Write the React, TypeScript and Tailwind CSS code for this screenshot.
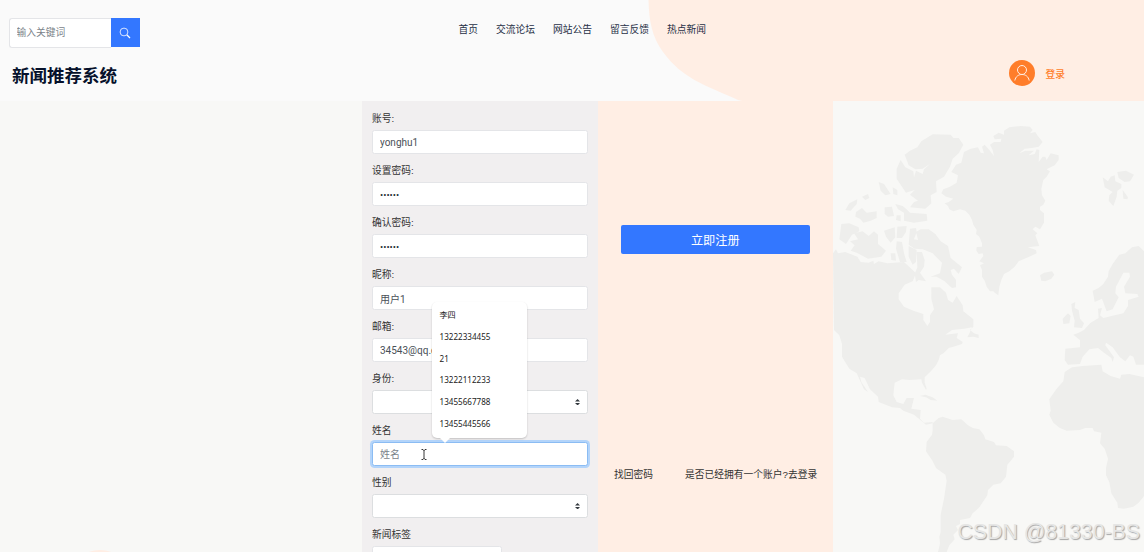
import { useState } from "react";

const navLinks = ["首页", "交流论坛", "网站公告", "留言反馈", "热点新闻"];

const suggestions = [
  "李四",
  "13222334455",
  "21",
  "13222112233",
  "13455667788",
  "13455445566",
];

type FieldProps = {
  label: string;
  type?: string;
  value?: string;
  placeholder?: string;
  focused?: boolean;
};

const Field = ({ label, type = "text", value = "", placeholder, focused }: FieldProps) => {
  const [text, setText] = useState<string>(value);

  return (
    <div className="h-[52px]">
      <label className="block h-[19px] leading-[15px] text-[9.75px] text-[#333]">
        {label}
      </label>
      <input
        type={type}
        value={text}
        placeholder={placeholder}
        onChange={(e) => setText(e.target.value)}
        className={`block h-[24px] w-[216.5px] max-w-full rounded-[2.5px] border bg-white px-[7px] font-['Roboto','Noto_Sans_CJK_SC',sans-serif] outline-none placeholder:text-[#7b838a] ${
          type === "password" ? "text-[9.5px] text-[#222b33]" : "text-[10px] text-[#495057]"
        } ${focused ? "border-[#8bbcf3] ring-2 ring-[#b3d4fa]" : "border-[#e4e5e8]"}`}
      />
    </div>
  );
};

const SelectField = ({ label }: { label: string }) => {
  return (
    <div className="h-[52px]">
      <label className="block h-[19px] leading-[15px] text-[9.75px] text-[#333]">
        {label}
      </label>
      <div className="flex h-[24px] items-center justify-end rounded-[2.5px] border border-[#dcdee0] bg-white pr-[7px]">
        <svg viewBox="0 0 4 5" className="h-[6.5px] w-[5.2px] fill-[#343a40]">
          <path d="M2 0L0 2h4zm0 5L0 3h4z" />
        </svg>
      </div>
    </div>
  );
};

const Suggestions = () => {
  return (
    <div className="absolute top-[200.5px] left-[70px] h-[136px] w-[94.5px] rounded-[5px] bg-white pt-[2.5px] shadow-[0_1px_2px_rgba(0,0,0,0.2)]">
      {suggestions.map((item) => (
        <p
          key={item}
          className="h-[21.8px] pl-[7.5px] font-['Noto_Sans','Noto_Sans_CJK_SC',sans-serif] text-[8.1px] leading-[21.8px] text-[#222]"
        >
          {item}
        </p>
      ))}
      <svg viewBox="0 0 10 5" className="absolute top-full left-[7.5px] h-[5px] w-2.5 fill-white">
        <path d="M0 0h10L5 5z" />
      </svg>
    </div>
  );
};

const WorldMap = () => {
  return (
    <svg viewBox="27 3 933 1353" className="h-full w-full fill-[#eeeeec]" preserveAspectRatio="none">
      {/* greenland and iceland */}
      <path d="M523 586L513 579 508 574 498 574 488 560 482 542 474 530 474 510 468 496 480 490 466 484 478 468 476 460 464 462 457 452 458 441 474 440 474 430 466 410 456 402 458 390 448 374 444 360 436 344 424 332 408 328 388 334 376 328 372 318 362 310 374 306 388 296 366 290 352 280 358 268 378 260 398 248 402 226 382 216 396 194 412 188 420 156 440 146 462 142 470 158 480 160 474 140 482 134 496 150 510 168 506 150 498 134 510 126 530 126 532 116 512 118 508 108 524 98 540 104 540 92 556 82 590 78 618 80 626 90 618 100 634 96 640 106 656 126 644 140 624 144 602 146 586 160 604 152 630 152 614 166 632 162 638 148 646 150 644 186 656 170 664 170 668 180 680 160 704 166 704 180 692 196 668 208 678 214 668 230 658 240 652 266 654 286 664 302 658 314 648 320 648 330 660 340 660 368 648 388 634 380 626 388 640 400 634 406 646 438 612 442 636 450 638 460 612 472 584 484 572 500 556 514 540 522 532 540 526 560z" />
      <path d="M648 526L660 518 684 514 691 524 682 536 664 544 652 542z" />
      {/* arctic islands */}
      <path d="M258 152L280 142 292 124 326 103 380 104 388 114 404 114 418 134 404 160 386 176 378 200 360 230 336 244 338 276 320 286 322 310 304 326 258 322 270 306 282 302 258 284 272 270 246 278 218 236 218 206 230 180 244 202 268 214 270 232 276 212 296 222 300 208 318 192 296 206 274 208 254 196 242 164z" />
      <path d="M214 312L236 318 246 326 258 338 308 342 310 362 270 368 240 362 240 338 222 328zM182 322L204 320 210 348 192 350 182 342zM164 246L180 252 200 282 184 286 170 272zM206 262L220 270 220 286 208 282zM114 290L132 282 136 294 124 300zM64 330L76 310 100 298 98 312 80 332zM96 336L114 324 128 338 158 334 158 354 140 362 118 368 108 356 94 350zM218 346L230 346 230 364 216 360z" />
      <path d="M52 372L76 370 104 382 106 394 84 404 66 432 46 418zM90 400L116 394 134 408 150 394 162 404 162 432 186 452 172 470 132 476 98 458 80 452 92 436 78 424 102 418zM180 392L212 382 214 412 200 428 186 410zM220 380L248 378 246 396 234 414 218 414zM218 424L234 426 240 460 248 486 228 486 216 446zM200 460L214 460 216 482 202 480z" />
      <path d="M258 386L276 384 278 396 270 418 282 420 276 396 290 388 314 388 334 402 350 424 372 438 380 474 414 502 404 522 390 506 380 510 384 524 396 540 396 562 384 564 362 544 338 530 320 530 348 520 354 488 326 460 296 448 272 446 254 434z" />
      <path d="M254 438L278 450 276 486 266 494 254 470zM278 456L294 456 302 480 300 500 288 518 306 544 284 540 276 546 272 522 280 502z" />
      {/* north america down to panama */}
      <path d="M27 460L36 448 42 460 64 456 100 470 110 486 134 488 148 482 150 492 164 484 190 490 240 486 276 520 266 544 242 554 224 580 224 598 240 620 268 632 298 642 298 660 310 678 318 666 318 646 330 628 322 596 322 562 348 562 366 578 372 600 386 608 398 588 416 616 418 634 448 658 448 680 438 690 450 700 464 704 464 714 448 710 430 712 438 696 444 682 420 686 384 690 364 704 402 700 398 714 416 726 414 732 388 740 374 744 360 758 348 766 344 780 336 796 322 812 302 832 302 848 308 866 306 870 294 848 292 838 256 840 234 838 212 848 208 886 218 906 238 912 248 894 270 894 262 926 290 930 288 956 300 968 326 966 326 970 306 974 282 954 270 944 238 932 228 924 204 922 164 906 162 890 138 868 122 834 108 830 112 846 132 876 120 868 98 820 76 806 54 770 54 732 46 706 30 690z" />
      <path d="M288 888L304 884 326 892 340 902 320 900 306 892z" />
      {/* south america */}
      <path d="M326 970L344 954 356 950 386 960 412 958 430 974 446 984 466 988 480 1006 484 1018 510 1026 516 1036 548 1038 570 1054 570 1070 550 1094 546 1130 530 1150 508 1154 492 1170 490 1186 466 1222 446 1240 438 1254 408 1260 408 1272 396 1278 402 1290 388 1304 392 1318 376 1336 368 1356 342 1356 346 1340 348 1330 346 1310 350 1296 350 1244 360 1196 368 1142 364 1124 336 1104 324 1080 306 1054 308 1026 324 1004 326 990z" />
      {/* svalbard, britain, scandinavia and europe */}
      <path d="M836 232L852 244 860 230 872 226 874 244 892 252 892 264 880 272 878 290 868 318 854 302 856 286 866 276 842 262zM880 216L906 212 930 224 918 244 902 246 884 234zM896 270L912 292 910 298 898 296zM742 612L754 606 752 624 764 630 768 656 780 670 774 684 750 682 752 662 744 632zM716 656L732 640 740 648 736 670 718 672z" />
      <path d="M960 454L944 438 924 442 904 460 886 464 866 492 854 514 852 530 838 552 824 564 806 572 812 606 834 596 848 634 866 628 884 592 874 580 876 560 898 518 916 518 918 530 900 560 904 580 940 582 944 590 912 600 912 618 898 640 872 646 838 654 828 646 834 624 822 626 824 654 800 668 780 690 764 698 748 704 768 720 768 742 724 746 722 780 732 794 768 792 776 770 796 748 822 744 842 760 862 774 866 786 870 772 844 736 846 728 866 742 888 772 904 784 918 766 928 770 936 794 960 794z" />
      {/* africa */}
      <path d="M960 832L916 822 892 824 888 836 860 828 836 814 832 794 776 798 744 802 722 816 718 844 698 866 676 898 680 932 676 944 688 968 708 984 728 992 768 990 784 984 806 984 810 994 832 998 828 1030 842 1046 852 1076 846 1104 846 1126 856 1146 862 1180 880 1208 882 1224 900 1226 928 1220 944 1208 960 1188z" />
    </svg>
  );
};

const Header = () => {
  return (
    <header className="relative h-[101px] bg-[#fafafa]">
      <svg viewBox="0 0 496 101" className="absolute top-0 right-0 h-full w-[496px] fill-[#ffeee4]">
        <path d="M.5 0C1 21 4 37 15 52c20 27 40 32 75 48l4 1h402V0z" />
      </svg>
      <div className="relative flex h-[54px] pt-[18px] pl-[8.5px]">
        <form className="flex h-[30px] w-[131.5px]">
          <input
            className="w-[102px] rounded-l-[3px] border border-r-0 border-[#e4e5e8] bg-white px-[7px] text-[9.75px] outline-none placeholder:text-[#7b838a]"
            placeholder="输入关键词"
          />
          <button
            type="button"
            className="flex h-[29px] w-[29px] items-center justify-center bg-[#3377ff] text-white"
          >
            <svg viewBox="0 0 12 12" className="size-3 fill-none stroke-current">
              <circle cx="5" cy="5" r="3.9" strokeWidth="0.8" />
              <path d="M8 8l3 3" strokeWidth="1.3" />
            </svg>
          </button>
        </form>
        <nav className="ml-[318.5px] flex h-[25px] items-center gap-[18px] text-[9.75px] text-[#273046]">
          {navLinks.map((link) => (
            <a key={link} href="#">
              {link}
            </a>
          ))}
        </nav>
      </div>
      <div className="relative flex h-[43px] items-center justify-between pr-[79px] pl-3">
        <h1 className="pt-px text-[17.5px] font-bold text-[#06112b]">新闻推荐系统</h1>
        <a href="#" className="flex items-center text-[9.75px] font-medium text-[#ff7d2a]">
          <span className="-mt-1.5 mr-[11px] flex size-[26px] items-center justify-center rounded-full bg-[#ff7d2a]">
            <svg viewBox="0 0 16 16" className="size-4 fill-none stroke-[#ffeee4]">
              <circle cx="8" cy="5" r="4.5" />
              <path d="M.8 15.5c.8-4 3.6-6 7.2-6s6.4 2 7.2 6" />
            </svg>
          </span>
          登录
        </a>
      </div>
    </header>
  );
};

const App = () => {
  return (
    <div className="relative h-[552px] w-[1144px] overflow-hidden bg-[#f8f8f6] font-['Liberation_Sans','Noto_Sans_CJK_SC',sans-serif]">
      <Header />
      <main className="flex h-[451px]">
        <div className="relative w-[362px] overflow-hidden">
          <div className="absolute top-[449px] left-[68px] size-16 rounded-full bg-[#ffeee4]" />
        </div>
        <form className="relative w-[236px] bg-[#f1eff0] px-2.5 pt-2.5">
          <Field label="账号:" value="yonghu1" />
          <Field label="设置密码:" type="password" value="123456" />
          <Field label="确认密码:" type="password" value="123456" />
          <Field label="昵称:" value="用户1" />
          <Field label="邮箱:" value="34543@qq.com" />
          <SelectField label="身份:" />
          <Field label="姓名" placeholder="姓名" focused />
          <SelectField label="性别" />
          <div className="w-[130px]">
            <Field label="新闻标签" />
          </div>
          <Suggestions />
          {/* text cursor over the name input */}
          <svg viewBox="0 0 6 11" className="absolute top-[348px] left-[59px] h-[11px] w-1.5 fill-none stroke-[#222]">
            <path d="M.5.5H2l1 1 1-1h1.5M3 1v9M.5 10.500H2l1-1 1 1h1.500" strokeWidth="0.9" />
          </svg>
        </form>
        <section className="w-[235px] bg-[#ffeee4] text-[#333]">
          <button
            type="button"
            className="mt-[124px] ml-[23px] block h-[29px] w-[188.5px] rounded-[2px] bg-[#3377ff] pt-[3px] text-[12.2px] leading-none text-white"
          >
            立即注册
          </button>
          <div className="mt-[213px] flex gap-[32px] pl-4 text-[9.75px] leading-4 whitespace-nowrap">
            <a href="#">找回密码</a>
            <a href="#">是否已经拥有一个账户?去登录</a>
          </div>
        </section>
        <div className="w-[311px]">
          <WorldMap />
        </div>
      </main>
      <p className="absolute right-[4px] bottom-[6px] text-[21.3px] leading-7 whitespace-nowrap text-[#e6e6e5] [text-shadow:1px_1px_1px_#a5a5a5]">
        CSDN @81330-BS
      </p>
    </div>
  );
};

export default App;
